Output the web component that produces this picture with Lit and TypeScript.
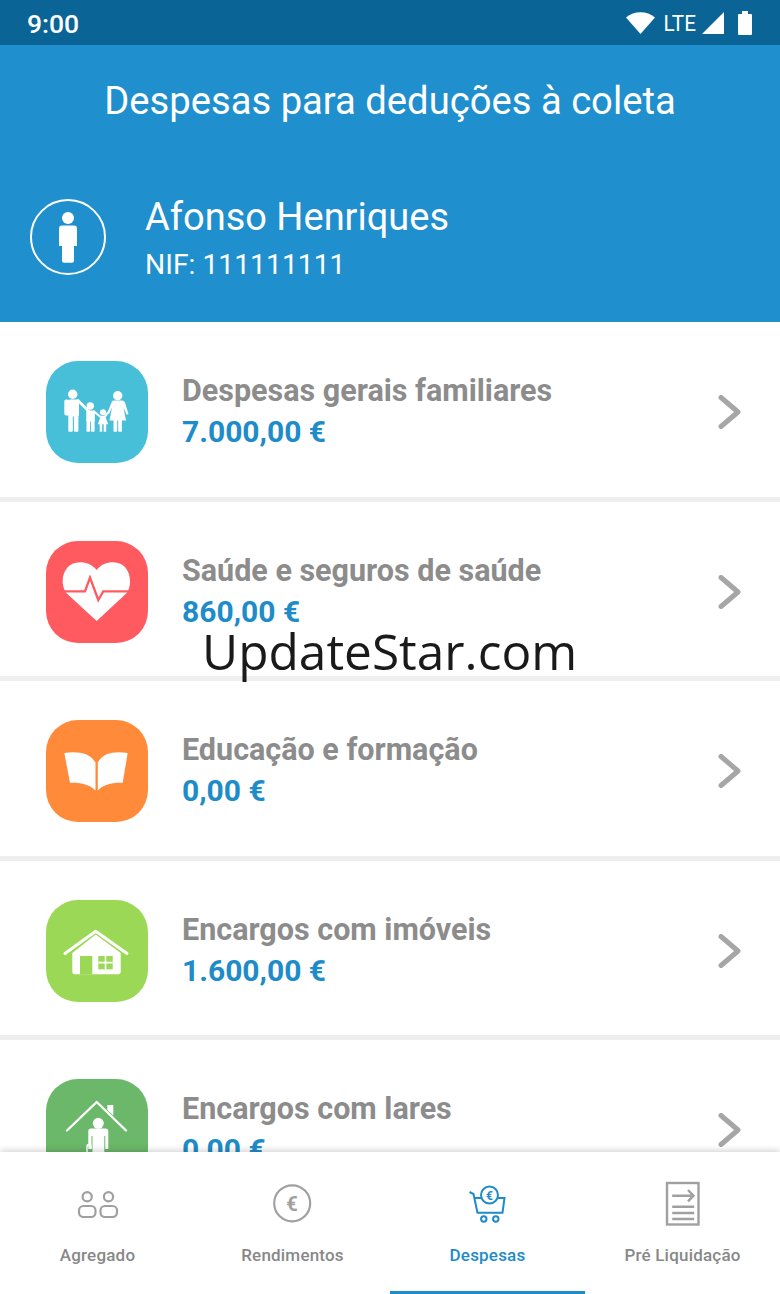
import { LitElement, html, css, svg } from "lit";
import { customElement } from "lit/decorators.js";

const family = svg`<g fill="#fff">
  <circle cx="26.700" cy="33.300" r="4.700"/>
  <rect x="22" y="38.500" width="11" height="17" rx="2"/>
  <rect x="18.300" y="38.500" width="5" height="16" rx="2"/>
  <rect x="22.300" y="52" width="4.500" height="18.700" rx="1"/>
  <rect x="27.900" y="52" width="4.500" height="18.700" rx="1"/>
  <path d="M32 39.500 43 50.500" stroke="#fff" stroke-width="2.600" stroke-linecap="round"/>
  <circle cx="44.300" cy="45" r="3.700"/>
  <rect x="40.300" y="49.500" width="8.500" height="11" rx="1"/>
  <rect x="40.500" y="58" width="3.600" height="12.700" rx=".8"/>
  <rect x="45" y="58" width="3.600" height="12.700" rx=".8"/>
  <path d="M48 50.500 54 55.500" stroke="#fff" stroke-width="2.200" stroke-linecap="round"/>
  <circle cx="57" cy="51.300" r="3"/>
  <path d="M55 54.700h4l3.300 8.500H51.800z"/>
  <rect x="53.700" y="62" width="2.500" height="8.700"/>
  <rect x="57.700" y="62" width="2.500" height="8.700"/>
  <path d="M59 55.500 62 51.500" stroke="#fff" stroke-width="2" stroke-linecap="round"/>
  <circle cx="71.700" cy="34.700" r="4.700"/>
  <path d="M67.500 39.500h8.500q2 0 3 2L82.500 53l-1.800.8-3.200-7.300 2.500 13H63.500l2.500-13-3 6.500-1.800-1 4.300-10.500q.7-2 2-2z"/>
  <rect x="67.500" y="58" width="3.700" height="12.700" rx=".8"/>
  <rect x="72.200" y="58" width="3.700" height="12.700" rx=".8"/>
</g>`;

const heart = svg`<path fill="#fff" d="M50.700 29C46 23.500 40 21.300 34 21.300 23 21.300 16.700 30 16.700 40c0 4 .8 7.500 3.300 11.700L50.700 80 81 51.700c2.500-4.200 3-7.700 3-11.700 0-10-6-18.700-17-18.700-6 0-12 2.200-16.300 7.700z"/>
<path fill="none" stroke="#ff5a5f" stroke-width="2.300" d="M14 50.300h25L44 36.500 52.300 59l5-8.700H87"/>`;

const book = svg`<path fill="#fff" d="M18.300 33C32 31 44 33 49.500 42.500v28C44 65 36 62.500 24 62.800z"/>
<path fill="#fff" d="M81.700 33C68 31 57 33 51.800 42.500v28C57 65 65 62.500 76.700 62.800z"/>`;

const house = svg`<path fill="none" stroke="#fff" stroke-width="3" stroke-linecap="round" stroke-linejoin="round" d="M19 53.500 49.700 31.200 81 53.500"/>
<path fill="#fff" d="M49.700 34.500 74.700 53v19q0 2.300-2.300 2.300H28.600q-2.300 0-2.300-2.300V53z"/>
<rect x="34" y="56" width="12.300" height="18.300" fill="#9bd855"/>
<rect x="52.300" y="56" width="14.400" height="13.300" fill="#9bd855"/>
<path stroke="#fff" stroke-width="1.600" d="M59.500 56v13.300M52.300 62.600h14.400"/>`;

const elder = svg`<path fill="none" stroke="#fff" stroke-width="2.400" stroke-linecap="round" stroke-linejoin="round" d="M21 51.500 50.700 23 80 51.500"/>
<path fill="#fff" d="M61.300 26h6v10.500l-6-5.500z"/>
<circle cx="52.300" cy="44.300" r="5.500" fill="#fff"/>
<path fill="#fff" d="M45 49.500h14.500q2.800 0 2.800 2.800V70h-3V57h-1v38H46.500V57h-1v13h-3.200V52.300q0-2.800 2.700-2.800z"/>
<path fill="none" stroke="#fff" stroke-width="1.500" d="M41 85V68q0-2.500 2-2.500t2 2.500v2"/>`;

interface Row { title: string; amount: string; color: string; icon: unknown; }

const rows: Row[] = [
  { title: "Despesas gerais familiares", amount: "7.000,00 €", color: "#47bfd9", icon: family },
  { title: "Saúde e seguros de saúde", amount: "860,00 €", color: "#ff5a5f", icon: heart },
  { title: "Educação e formação", amount: "0,00 €", color: "#ff8a3a", icon: book },
  { title: "Encargos com imóveis", amount: "1.600,00 €", color: "#9bd855", icon: house },
  { title: "Encargos com lares", amount: "0,00 €", color: "#6bb86a", icon: elder },
];

@customElement("app-root")
export class AppRoot extends LitElement {
  static styles = css`
    :host { display: block; width: 780px; height: 1294px; font-family: Roboto, "Liberation Sans", sans-serif; }
    .page { position: relative; display: flex; flex-direction: column; height: 1294px; background: #fff; overflow: hidden; }
    .status { flex: none; height: 45px; background: #0a6496; display: flex; align-items: center; padding: 0 28px 0 27px; color: #fff; }
    .time { font-size: 26.500px; font-weight: 500; flex: 1; padding-top: 2px; }
    .lte { font-size: 22.500px; margin: 0 5px 0 7px; transform: scaleX(.92); padding-top: 1px; }
    .status svg { display: block; }
    .sig { margin-right: 14px; }
    .header { flex: none; height: 277px; background: #1f8fce; color: #fff; box-sizing: border-box; }
    .title { text-align: center; font-size: 38.200px; line-height: 44px; padding-top: 34px; height: 76px; box-sizing: content-box; }
    .user { display: flex; align-items: center; padding: 0 0 0 30px; margin-top: 31px; }
    .avatar { flex: none; width: 76px; height: 76px; display: block; margin-top: 6px; }
    .names { margin-left: 39px; }
    .name { font-size: 38px; line-height: 44px; margin-top: 9px; }
    .nif { font-size: 28.300px; line-height: 34px; margin-top: 9px; }
    .list { flex: 1; min-height: 0; overflow: hidden; }
    .row { box-sizing: border-box; height: 179.600px; border-bottom: 5.600px solid #eeeeee; display: flex; align-items: flex-start; padding: 39px 38px 0 46px; }
    .icon { flex: none; width: 102px; height: 102px; border-radius: 32px; overflow: hidden; }
    .icon svg { display: block; }
    .text { flex: 1; margin-left: 34px; }
    .row-title { font-size: 30.500px; font-weight: 700; color: #8c8c8c; line-height: 34px; margin-top: 13px; }
    .amount { font-size: 30px; font-weight: 700; color: #1e8cc9; line-height: 34px; margin-top: 7px; }
    .chev { flex: none; margin-top: 34px; display: block; }
    .nav { flex: none; height: 142px; background: #fff; display: grid; grid-template-columns: repeat(4, 195px); position: relative; box-shadow: 0 -2px 6px rgba(0,0,0,.16); }
    .tab { position: relative; display: flex; flex-direction: column; align-items: center; color: #888; font-size: 17px; font-weight: 500; letter-spacing: .2px; }
    .tab svg { display: block; height: 48px; width: 60px; margin-top: 28px; }
    .tab span { margin-top: 17px; line-height: 20px; }
    .tab.on { color: #1e8cc9; }
    .tab.on::after { content: ""; position: absolute; left: 0; right: 0; bottom: 0; height: 3px; background: #1e8cc9; }
    .mark { position: absolute; left: 202px; top: 617px; font-family: "Open Sans", sans-serif; font-size: 49.600px; line-height: 68px; color: #1a1a1a; white-space: nowrap; }
  `;

  render() {
    return html`<div class="page">
      <div class="status">
        <div class="time">9:00</div>
        <svg width="29" height="22" viewBox="0 0 29 22"><path fill="#fff" d="M0 5.500C8-1.500 21-1.500 29 5.500L14.500 22z"/></svg>
        <div class="lte">LTE</div>
        <svg class="sig" width="22" height="22" viewBox="0 0 22 22"><path fill="#fff" d="M22 0v22H0z"/></svg>
        <svg width="14" height="24" viewBox="0 0 14 24"><path fill="#fff" d="M4 0h6v3h3q1 0 1 1v19q0 1-1 1H1q-1 0-1-1V4q0-1 1-1h3z"/></svg>
      </div>
      <div class="header">
        <div class="title">Despesas para deduções à coleta</div>
        <div class="user">
          <svg class="avatar" viewBox="0 0 76 76"><circle cx="38" cy="38" r="37" fill="none" stroke="#fff" stroke-width="2"/>
            <circle cx="38" cy="19" r="6" fill="#fff"/><path fill="#fff" d="M32 26.500h12q3 0 3 3V47h-3v14.700q0 2-2 2h-8q-2 0-2-2V47h-3V29.500q0-3 3-3z"/></svg>
          <div class="names"><div class="name">Afonso Henriques</div><div class="nif">NIF: 111111111</div></div>
        </div>
      </div>
      <div class="list">
        ${rows.map((r) => html`<div class="row">
          <div class="icon" style="background:${r.color}"><svg width="102" height="102" viewBox="0 0 102 102">${r.icon}</svg></div>
          <div class="text"><div class="row-title">${r.title}</div><div class="amount">${r.amount}</div></div>
          <svg class="chev" width="24" height="34" viewBox="0 0 24 34"><path d="M3 2.500 20 17 3 31.500" fill="none" stroke="#a6a6a6" stroke-width="5" stroke-linecap="round" stroke-linejoin="round"/></svg>
        </div>`)}
      </div>
      <div class="nav">
        <div class="tab">
          <svg viewBox="0 0 60 48" fill="none" stroke="#a0a0a0" stroke-width="2.200"><circle cx="19.200" cy="16.700" r="4.600"/><circle cx="40.500" cy="16.700" r="4.600"/><rect x="11" y="26" width="16.500" height="11" rx="4.500"/><rect x="32.500" y="26" width="16.500" height="11" rx="4.500"/></svg>
          <span>Agregado</span>
        </div>
        <div class="tab">
          <svg viewBox="0 0 60 48" fill="none" stroke="#a0a0a0" stroke-width="2.200"><circle cx="29.200" cy="23.300" r="18"/><text x="29.200" y="30.500" text-anchor="middle" font-family="Roboto" font-size="20" font-weight="700" fill="#a0a0a0" stroke="none">€</text></svg>
          <span>Rendimentos</span>
        </div>
        <div class="tab on">
          <svg viewBox="0 0 60 48" fill="none" stroke="#1e8cc9" stroke-width="2"><path d="M11.500 12l4 2 4 18.700h25l2-14.700H15.500"/><circle cx="31.500" cy="15" r="8.500" fill="#fff"/><text x="31.500" y="19.500" text-anchor="middle" font-family="Roboto" font-size="12" font-weight="700" fill="#1e8cc9" stroke="none">€</text><circle cx="25.800" cy="39" r="2.700"/><circle cx="37.800" cy="39" r="2.700"/></svg>
          <span>Despesas</span>
        </div>
        <div class="tab">
          <svg viewBox="0 0 60 48" fill="none" stroke="#a0a0a0" stroke-width="2.400"><rect x="14" y="3" width="31.500" height="41.500"/><path d="M19.200 15.700h21.300M35 10l5.500 5.700L35 21.400M19.200 26.700h22M19.200 33h22M19.200 39h22"/></svg>
          <span>Pré Liquidação</span>
        </div>
      </div>
      <div class="mark">UpdateStar.com</div>
    </div>`;
  }
}
